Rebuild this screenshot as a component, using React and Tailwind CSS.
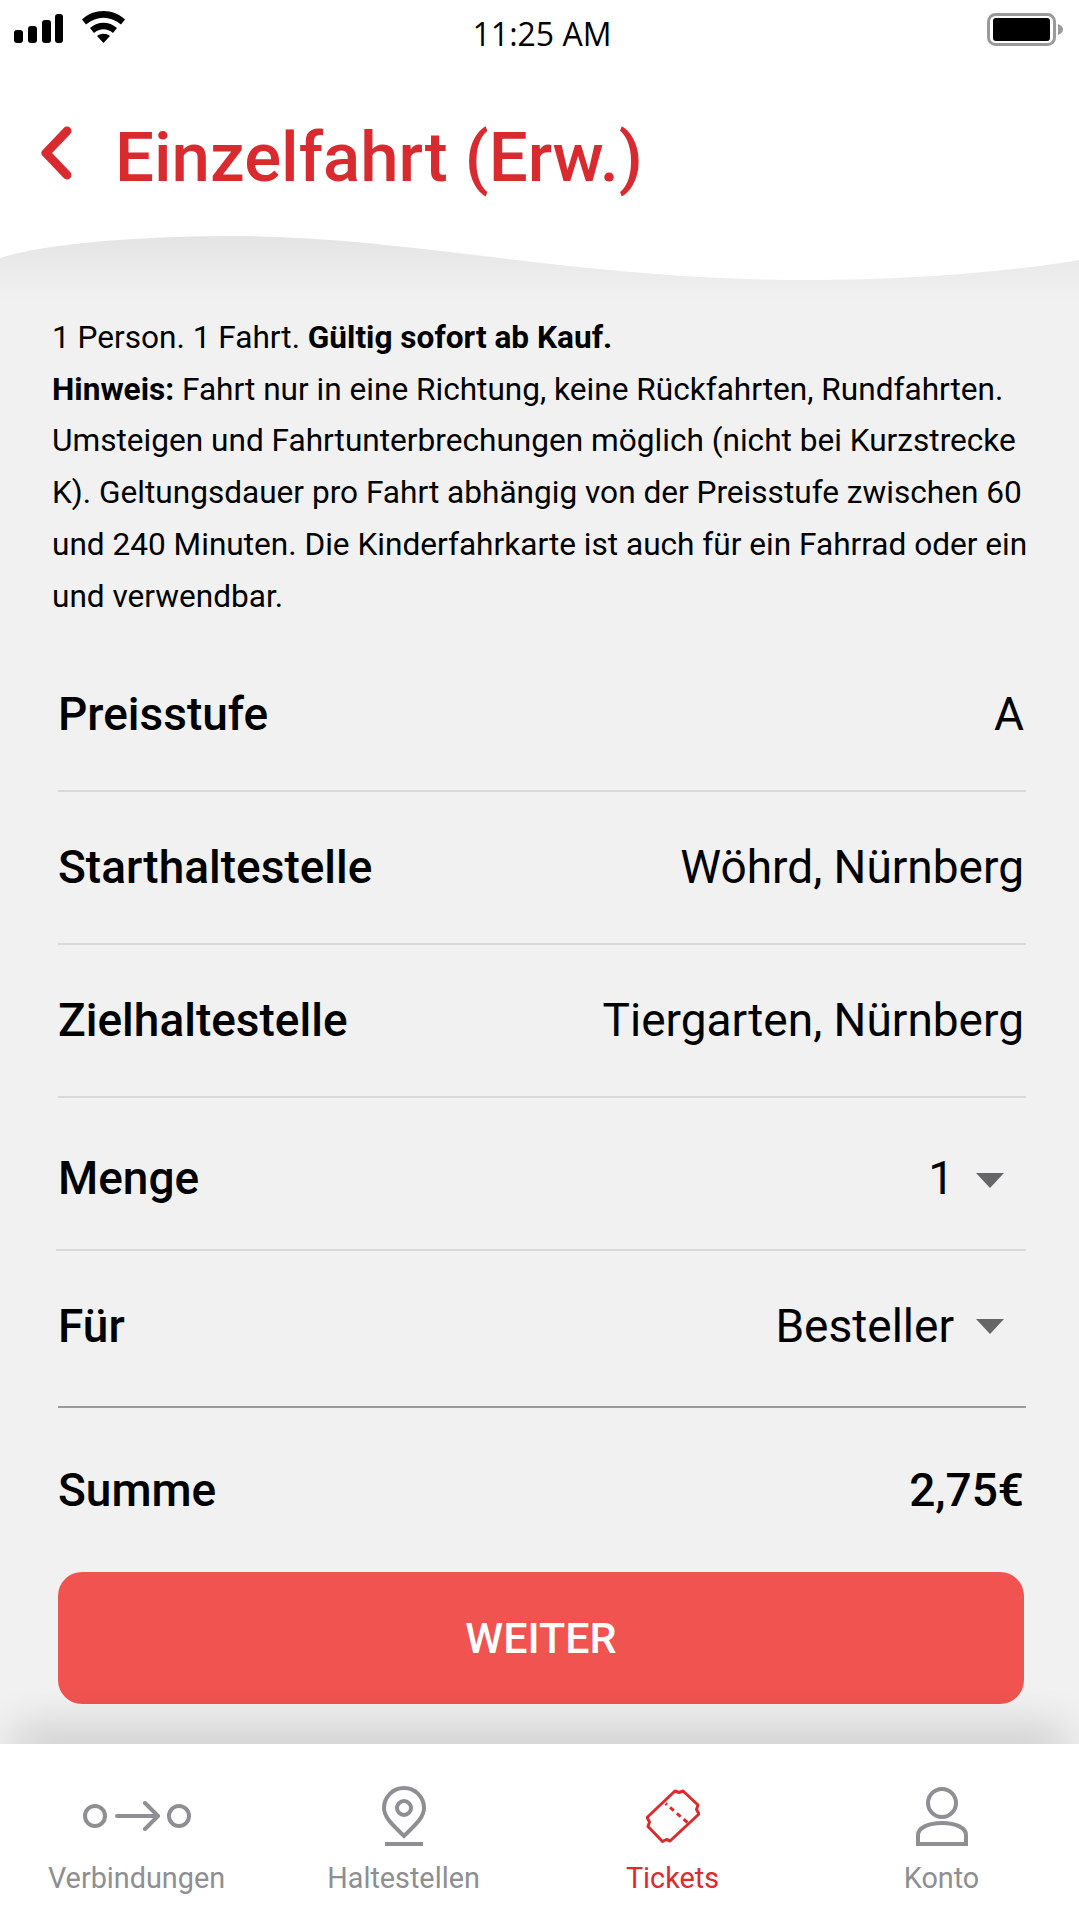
const rows = [
  { label: 'Preisstufe', value: 'A' },
  { label: 'Starthaltestelle', value: 'Wöhrd, Nürnberg' },
  { label: 'Zielhaltestelle', value: 'Tiergarten, Nürnberg' },
];

function Caret({ className }) {
  return (
    <svg width="28" height="15" viewBox="0 0 28 15" className={`ml-[22px] ${className}`}>
      <path d="M0 0h28L14 15z" fill="#666668" />
    </svg>
  );
}

function TabItem({ label, active, children, className }) {
  return (
    <div className={`flex w-[269px] flex-col items-center ${active ? 'text-[#dc2a2e]' : 'text-[#8e8e93]'} ${className}`}>
      <div className="flex h-[70px] items-center justify-center pt-[2px]">{children}</div>
      <span className="mt-[10px] text-[28.800px] leading-[36px]">{label}</span>
    </div>
  );
}

export default function App() {
  return (
    <div className="flex h-[1920px] w-[1079px] flex-col overflow-hidden bg-white font-['Roboto',sans-serif] text-black">
      {/* status bar */}
      <div className="flex h-[60px] items-start justify-between">
        <div className="flex w-[200px] items-start pl-[14px] pt-[14px]">
          <svg width="49" height="29" viewBox="0 0 49 29" fill="currentColor">
            <rect x="0" y="16" width="9" height="13" rx="3" />
            <rect x="14" y="12" width="9" height="17" rx="3" />
            <rect x="28" y="6" width="9" height="23" rx="3" />
            <rect x="41" y="0" width="8" height="29" rx="3" />
          </svg>
          <svg width="43" height="32" viewBox="0 0 43 32" className="ml-[19px] -mt-[3px]" fill="currentColor">
            <path d="M0 8.500C12 -2.800 31 -2.800 43 8.500l-4 5C28 4.500 15 4.500 4 13.500z" />
            <path d="M8 17C16 10 27 10 35 17l-4 5C25 17 18 17 12 22z" />
            <path d="M15 25C19 22 24 22 28 25L21.500 32z" />
          </svg>
        </div>
        <span className="ml-[5px] mt-[15px] font-['Open_Sans',sans-serif] text-[32px] font-medium leading-[38px]">11:25 AM</span>
        <div className="flex w-[200px] justify-end pr-[16px] pt-[13px]">
          <svg width="76" height="33" viewBox="0 0 76 33">
            <rect x="1.500" y="1.500" width="66" height="30" rx="7" fill="none" stroke="#9a9a9a" strokeWidth="3" />
            <rect x="6" y="5" width="57" height="23" rx="3" fill="#000" />
            <path d="M71 11c3 1 5 3 5 5.500s-2 4.500-5 5.500z" fill="#9a9a9a" />
          </svg>
        </div>
      </div>

      {/* header */}
      <div className="flex h-[176px] items-center pl-[40px] pt-[20px]">
        <svg width="32" height="54" viewBox="0 0 32 54" className="mb-[10px]" fill="none" stroke="#d92b2f" strokeWidth="9" strokeLinecap="round" strokeLinejoin="round">
          <path d="M27 5L6 27l21 22" />
        </svg>
        <h1 className="ml-[43px] text-[69px] font-medium leading-[80px] text-[#d92b2f]">Einzelfahrt (Erw.)</h1>
      </div>

      {/* main */}
      <div className="relative flex-1 overflow-hidden bg-[#f1f1f1]">
        <svg width="1079" height="64" viewBox="0 0 1079 64" className="absolute left-0 top-0">
          <defs>
            <linearGradient id="fade" x1="0" y1="0" x2="0" y2="1">
              <stop offset="0" stopColor="#e4e4e4" />
              <stop offset="1" stopColor="#f1f1f1" />
            </linearGradient>
          </defs>
          <rect width="1079" height="64" fill="url(#fade)" />
          <path d="M0 22C50 6 150 0 240 0C420 2 560 41 790 44C900 45 1010 36 1079 24V0H0z" fill="#fff" />
        </svg>

        <div className="relative px-[52px] pt-[76px]">
          <div className="w-[1000px] overflow-hidden whitespace-nowrap text-[31.600px] leading-[51.700px]">
            <p>1 Person. 1 Fahrt. <b className="font-bold">Gültig sofort ab Kauf.</b></p>
            <p><b className="font-bold">Hinweis:</b> Fahrt nur in eine Richtung, keine Rückfahrten, Rundfahrten.</p>
            <p>Umsteigen und Fahrtunterbrechungen möglich (nicht bei Kurzstrecke</p>
            <p>K). Geltungsdauer pro Fahrt abhängig von der Preisstufe zwischen 60</p>
            <p>und 240 Minuten. Die Kinderfahrkarte ist auch für ein Fahrrad oder ein</p>
            <p>und verwendbar.</p>
          </div>
        </div>

        <div className="relative mx-[58px] mt-[17px] w-[968px] text-[46px]">
          {rows.map((r) => (
            <div key={r.label} className="flex h-[153px] items-center justify-between border-b-[2px] border-[#d8d8d8] pr-[2px]">
              <span className="font-medium">{r.label}</span>
              <span>{r.value}</span>
            </div>
          ))}
          <div className="-ml-[2px] flex h-[153px] items-center justify-between border-b-[2px] border-[#d8d8d8] pl-[2px] pr-[22px] pt-[10px]">
            <span className="font-medium">Menge</span>
            <span className="flex items-center">1<Caret className="mt-[4px]" /></span>
          </div>
          <div className="flex h-[157px] items-center justify-between border-b-[2px] border-[#9a9a9a] pb-[4px] pr-[22px]">
            <span className="font-medium">Für</span>
            <span className="flex items-center">Besteller<Caret /></span>
          </div>
          <div className="flex h-[164px] items-center justify-between pr-[2px]">
            <span className="font-medium">Summe</span>
            <span className="font-medium">2,75€</span>
          </div>
          <button className="h-[132px] w-[966px] rounded-[24px] bg-[#f05350] text-[43px] font-medium text-white">WEITER</button>
        </div>

        {/* shadow thrown by the tab bar */}
        <div className="absolute inset-x-[30px] -bottom-[10px] h-[10px] shadow-[0_0_44px_16px_rgba(0,0,0,0.16)]" />
      </div>

      {/* tab bar */}
      <div className="relative flex h-[176px] bg-white pt-[36px]">
        <TabItem label="Verbindungen" className="pl-[4px]">
          <svg width="108" height="30" viewBox="0 0 108 30" fill="none" stroke="currentColor" strokeWidth="4" strokeLinecap="round" strokeLinejoin="round">
            <circle cx="12" cy="15" r="10" />
            <path d="M34 15h41M62 2l13 13-13 13" />
            <circle cx="96" cy="15" r="10" />
          </svg>
        </TabItem>
        <TabItem label="Haltestellen">
          <svg width="44" height="60" viewBox="0 0 44 60" fill="none" stroke="currentColor" strokeWidth="4">
            <path d="M22 2C11 2 2 11 2 22c0 10 10 18 20 28c10-10 20-18 20-28C42 11 33 2 22 2z" />
            <circle cx="22" cy="22" r="7" />
            <path d="M3 58h38" />
          </svg>
        </TabItem>
        <TabItem active label="Tickets">
          <svg width="54" height="54" viewBox="0 0 54 54" fill="none" stroke="currentColor" strokeWidth="3" strokeLinejoin="round">
            <path d="M29 2l4 1.500 4-1.500 15 14-1.500 4.500 2.500 4.500-29 27-3.500-1.500-4 2-14.500-15 1.500-4.500-2.500-4.500z" />
            <path d="M19.500 14.500L42 34" strokeDasharray="2 4 5 4 5 4 5" />
          </svg>
        </TabItem>
        <TabItem label="Konto">
          <svg width="52" height="59" viewBox="0 0 52 59" fill="none" stroke="currentColor" strokeWidth="4">
            <circle cx="26" cy="16" r="14" />
            <path d="M2 57V48C2 41 12 36 26 36s24 5 24 12v9z" />
          </svg>
        </TabItem>
      </div>
    </div>
  );
}
